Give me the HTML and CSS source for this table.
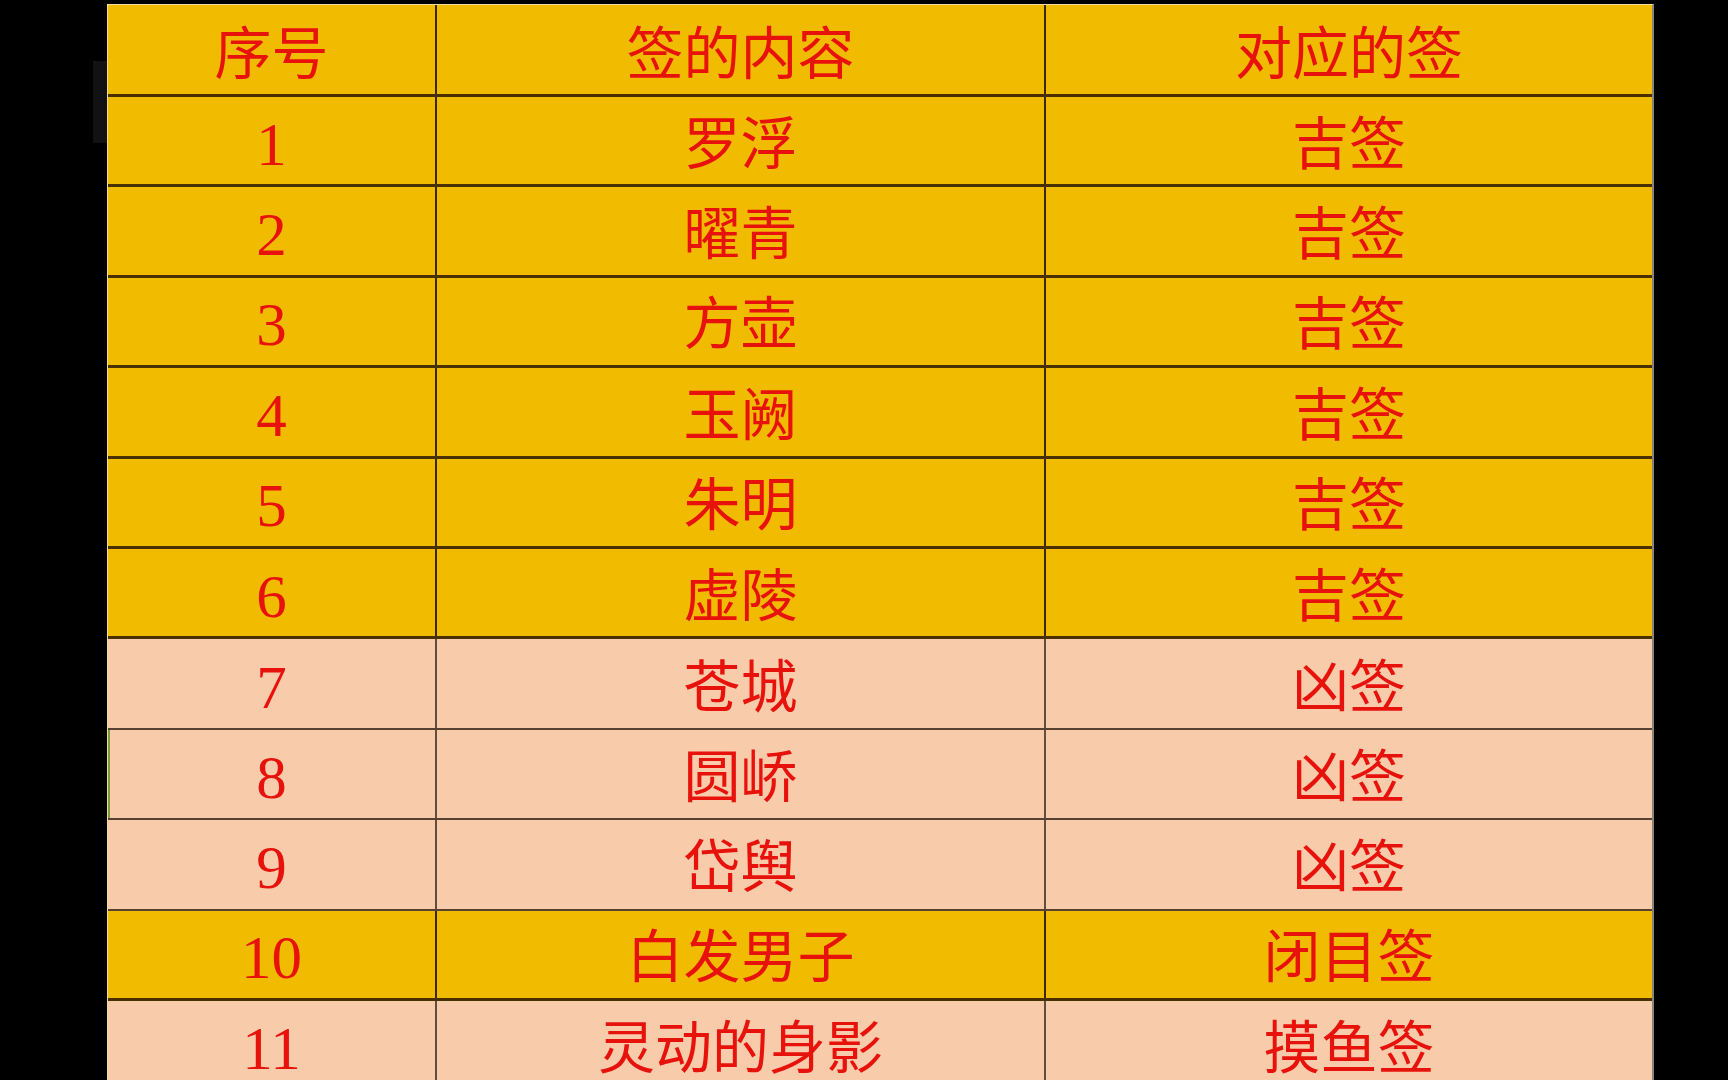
FILE: index.html
```html
<!DOCTYPE html>
<html lang="zh-CN">
<head>
<meta charset="utf-8">
<title>签</title>
<link rel="stylesheet" href="styles.css">
</head>
<body>
<div class="frame">
  <div class="gutter"><div class="ghost"></div></div>
  <div class="sheet">
    <div class="row gold head"><div class="cell num">序号</div><div class="cell">签的内容</div><div class="cell last">对应的签</div></div>
    <div class="row gold"><div class="cell num">1</div><div class="cell">罗浮</div><div class="cell last">吉签</div></div>
    <div class="row gold"><div class="cell num">2</div><div class="cell">曜青</div><div class="cell last">吉签</div></div>
    <div class="row gold"><div class="cell num">3</div><div class="cell">方壶</div><div class="cell last">吉签</div></div>
    <div class="row gold"><div class="cell num">4</div><div class="cell">玉阙</div><div class="cell last">吉签</div></div>
    <div class="row gold"><div class="cell num">5</div><div class="cell">朱明</div><div class="cell last">吉签</div></div>
    <div class="row gold"><div class="cell num">6</div><div class="cell">虚陵</div><div class="cell last">吉签</div></div>
    <div class="row peach"><div class="cell num">7</div><div class="cell">苍城</div><div class="cell last">凶签</div></div>
    <div class="row peach"><div class="cell num mark">8</div><div class="cell">圆峤</div><div class="cell last">凶签</div></div>
    <div class="row peach"><div class="cell num">9</div><div class="cell">岱舆</div><div class="cell last">凶签</div></div>
    <div class="row gold"><div class="cell num">10</div><div class="cell">白发男子</div><div class="cell last">闭目签</div></div>
    <div class="row peach"><div class="cell num">11</div><div class="cell">灵动的身影</div><div class="cell last">摸鱼签</div></div>
  </div>
</div>
</body>
</html>
```

FILE: styles.css
```css
html, body {
  margin: 0;
  padding: 0;
  background: #000;
  height: 1080px;
  overflow: hidden;
}

.frame {
  display: flex;
  align-items: flex-start;
  padding-top: 4px;
}

.gutter {
  width: 107px;
  flex: none;
}

.ghost {
  margin-left: 93px;
  margin-top: 57px;
  width: 14px;
  height: 82px;
  background: #121212;
}

.sheet {
  width: 1547px;
  box-sizing: border-box;
  border-top: 1px solid #f3dc9a;
  border-left: 1px solid #f3dc9a;
  border-right: 2px solid #8a8378;
  font-family: "Liberation Serif", "Noto Sans CJK SC", serif;
  color: #e8120c;
}

.row {
  display: grid;
  grid-template-columns: 329px 609px 1fr;
  height: 90.4px;
  box-sizing: border-box;
}

.row.head {
  height: 92px;
}

.gold {
  background: #f1bb00;
  border-bottom: 3px solid rgba(45, 25, 0, 0.86);
}

.peach {
  background: #f8cbab;
  border-bottom: 2px solid rgba(45, 30, 20, 0.8);
}

.cell {
  display: flex;
  align-items: center;
  justify-content: center;
  font-size: 57px;
  line-height: 1;
  border-right: 2px solid rgba(25, 15, 0, 0.85);
  padding-top: 7px;
  box-sizing: border-box;
}

.peach .cell {
  border-right-color: rgba(50, 35, 25, 0.75);
}

.cell.last {
  border-right: none;
}

.cell.num {
  font-size: 61px;
}

.head .cell.num {
  font-size: 57px;
}

.head .cell {
  padding-top: 9px;
}

.cell.mark {
  box-shadow: inset 2px 0 0 #7f9a3c;
}
```
